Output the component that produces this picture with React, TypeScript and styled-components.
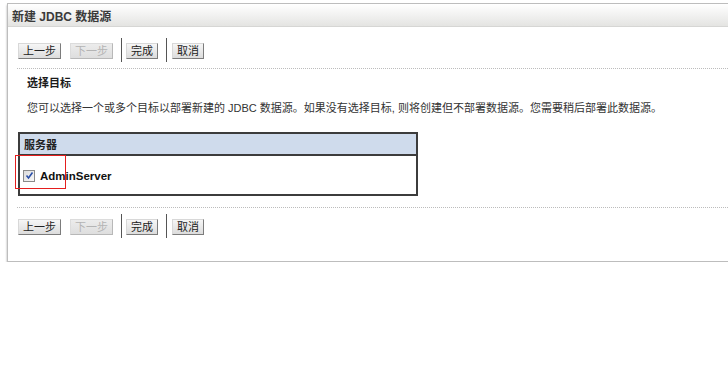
import React from "react";
import styled, { createGlobalStyle } from "styled-components";

const Global = createGlobalStyle`
  html, body {
    margin: 0;
    padding: 0;
    background: #ffffff;
    overflow: hidden;
  }
  body {
    font-family: "Liberation Sans", "Noto Sans CJK SC", sans-serif;
    color: #333333;
  }
`;

const Panel = styled.div`
  margin: 3px 0 0 7px;
  width: 740px;
  background: #ffffff;
  border: 1px solid #bdbdbd;
  border-right: none;
  box-shadow: 0 2px 2px rgba(0, 0, 0, 0.35);
`;

const Header = styled.div`
  height: 22px;
  display: flex;
  align-items: center;
  padding-left: 4px;
  background: linear-gradient(#ffffff, #e4e4e2);
  border-bottom: 1px solid #d6d6d4;
  font-size: 12px;
  font-weight: bold;
  color: #3a3a3a;
`;

const Body = styled.div`
  padding: 0 0 23px 10px;
`;

const Toolbar = styled.div<{ $top: number }>`
  display: flex;
  align-items: center;
  height: 24px;
  margin-top: ${(p) => p.$top}px;
`;

const Button = styled.button<{ $gap: number }>`
  height: 16px;
  margin: 1px ${(p) => p.$gap}px 0 0;
  padding: 0 4px;
  font-family: "Liberation Sans", "Noto Sans CJK SC", sans-serif;
  font-size: 11px;
  line-height: 14px;
  color: #222222;
  background: linear-gradient(#f6f6f6, #dcdcdc);
  border: 1px solid;
  border-color: #d8d8d8 #7c7c7c #7c7c7c #d8d8d8;
  cursor: pointer;
  &:disabled {
    color: #b4b4b4;
    background: linear-gradient(#ececec, #dedede);
    border-color: #dcdcdc #b8b8b8 #b8b8b8 #dcdcdc;
    cursor: default;
  }
`;

const Separator = styled.span<{ $gap: number }>`
  width: 1px;
  height: 24px;
  background: #555555;
  margin-right: ${(p) => p.$gap}px;
`;

const Divider = styled.div<{ $top: number }>`
  margin: ${(p) => p.$top}px 0 0 -1px;
  border-top: 1px dotted #bcbcbc;
`;

const SectionTitle = styled.div`
  margin: 7px 0 0 9px;
  font-size: 11px;
  line-height: 14px;
  font-weight: bold;
  color: #1a1a1a;
`;

const Description = styled.div`
  margin: 11px 0 0 9px;
  font-size: 11px;
  line-height: 14px;
  color: #333333;
  white-space: nowrap;
`;

const Table = styled.div`
  position: relative;
  margin-top: 17px;
  width: 396px;
  border: 2px solid #3c3c3c;
`;

const HeadRow = styled.div`
  height: 20px;
  display: flex;
  align-items: center;
  padding-left: 4px;
  background: #cfdbec;
  border-bottom: 2px solid #3c3c3c;
  font-size: 11px;
  font-weight: bold;
  color: #222222;
`;

const DataRow = styled.div`
  height: 38px;
  display: flex;
  align-items: center;
  gap: 5px;
  padding-left: 3px;
  padding-top: 1px;
  box-sizing: border-box;
`;

const CheckBox = styled.span`
  width: 10px;
  height: 10px;
  border: 1px solid #8a8a8a;
  background: linear-gradient(135deg, #dcdcdc, #f8f8f8);
  display: flex;
  align-items: center;
  justify-content: center;
`;

const ServerName = styled.span`
  font-size: 11.5px;
  font-weight: bold;
  color: #111111;
`;

const Highlight = styled.div`
  position: absolute;
  left: -5px;
  top: 21px;
  width: 49px;
  height: 32px;
  border: 1px solid #e41e1e;
  pointer-events: none;
`;

function Buttons({ top }: { top: number }) {
  return (
    <Toolbar $top={top}>
      <Button $gap={9}>上一步</Button>
      <Button $gap={8} disabled>
        下一步
      </Button>
      <Separator $gap={4} />
      <Button $gap={8}>完成</Button>
      <Separator $gap={5} />
      <Button $gap={0}>取消</Button>
    </Toolbar>
  );
}

export default function App() {
  return (
    <>
      <Global />
      <Panel>
        <Header>新建 JDBC 数据源</Header>
        <Body>
          <Buttons top={11} />
          <Divider $top={6} />
          <SectionTitle>选择目标</SectionTitle>
          <Description>
            您可以选择一个或多个目标以部署新建的 JDBC 数据源。如果没有选择目标, 则将创建但不部署数据源。您需要稍后部署此数据源。
          </Description>
          <Table>
            <HeadRow>服务器</HeadRow>
            <DataRow>
              <CheckBox>
                <svg width="9" height="9" viewBox="0 0 9 9">
                  <path d="M1.5 4.5 L3.5 7 L7.5 1.5" fill="none" stroke="#2a4fa8" strokeWidth="1.6" />
                </svg>
              </CheckBox>
              <ServerName>AdminServer</ServerName>
            </DataRow>
            <Highlight />
          </Table>
          <Divider $top={11} />
          <Buttons top={6} />
        </Body>
      </Panel>
    </>
  );
}
